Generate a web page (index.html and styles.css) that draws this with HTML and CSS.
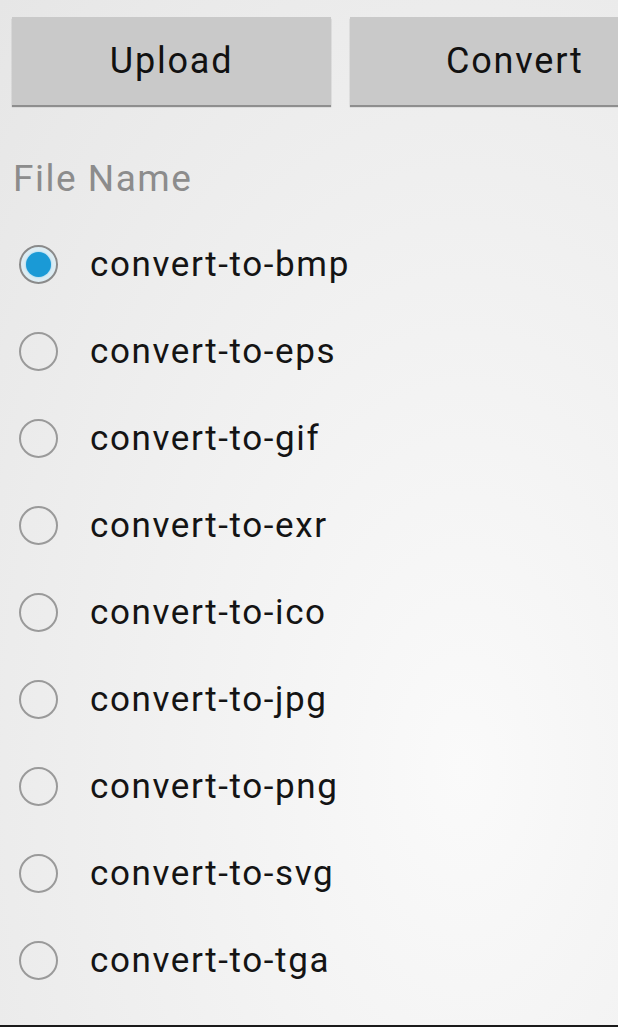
FILE: index.html
```html
<!DOCTYPE html>
<html>
<head>
<meta charset="utf-8">
<link rel="stylesheet" href="styles.css">
</head>
<body>
<div class="screen">
  <div class="buttons">
    <div class="btn">Upload</div>
    <div class="btn">Convert</div>
  </div>
  <div class="label">File Name</div>
  <div class="list">
    <div class="row"><span class="radio checked"></span><span class="name">convert-to-bmp</span></div>
    <div class="row"><span class="radio"></span><span class="name">convert-to-eps</span></div>
    <div class="row"><span class="radio"></span><span class="name">convert-to-gif</span></div>
    <div class="row"><span class="radio"></span><span class="name">convert-to-exr</span></div>
    <div class="row"><span class="radio"></span><span class="name">convert-to-ico</span></div>
    <div class="row"><span class="radio"></span><span class="name">convert-to-jpg</span></div>
    <div class="row"><span class="radio"></span><span class="name">convert-to-png</span></div>
    <div class="row"><span class="radio"></span><span class="name">convert-to-svg</span></div>
    <div class="row"><span class="radio"></span><span class="name">convert-to-tga</span></div>
  </div>
</div>
</body>
</html>
```
FILE: styles.css
```css
html, body {
  margin: 0;
  padding: 0;
}
body {
  width: 618px;
  height: 1027px;
  overflow: hidden;
  font-family: Roboto, "Liberation Sans", sans-serif;
}
.screen {
  box-sizing: border-box;
  height: 1027px;
  overflow: hidden;
  background: radial-gradient(ellipse at 75% 75%, #fafafa 0%, #f2f2f2 40%, #e6e6e6 100%);
  border-bottom: 2px solid #1a1a1a;
  padding-top: 17px;
}
.buttons {
  display: flex;
  gap: 19px;
  padding-left: 12px;
}
.btn {
  width: 319px;
  height: 88px;
  flex: none;
  background: #c9c9c9;
  box-shadow: 0 2px 1px #8e8e8e;
  display: flex;
  align-items: center;
  justify-content: center;
  font-size: 36px;
  letter-spacing: 1.8px;
  color: #111;
}
.btn + .btn {
  justify-content: flex-start;
  padding-left: 96px;
  box-sizing: border-box;
}
.label {
  margin-top: 52px;
  padding-left: 13px;
  font-size: 37px;
  letter-spacing: 1.5px;
  color: #8c8c8c;
  height: 44px;
  line-height: 44px;
}
.list {
  margin-top: 20px;
  padding-left: 19px;
}
.row {
  display: flex;
  align-items: center;
  height: 87px;
}
.radio {
  box-sizing: border-box;
  width: 39px;
  height: 39px;
  border-radius: 50%;
  border: 2px solid #9a9a9a;
  flex: none;
  position: relative;
}
.radio.checked {
  border-color: #8a8a8a;
  background: #dcecf3;
}
.radio.checked::after {
  content: "";
  position: absolute;
  left: 5px;
  top: 5px;
  width: 25px;
  height: 25px;
  border-radius: 50%;
  background: #1a9ad6;
  box-shadow: 0 0 2px #6cc4ee;
}
.name {
  margin-left: 32px;
  font-size: 35px;
  letter-spacing: 1.6px;
  color: #141414;
}
```
